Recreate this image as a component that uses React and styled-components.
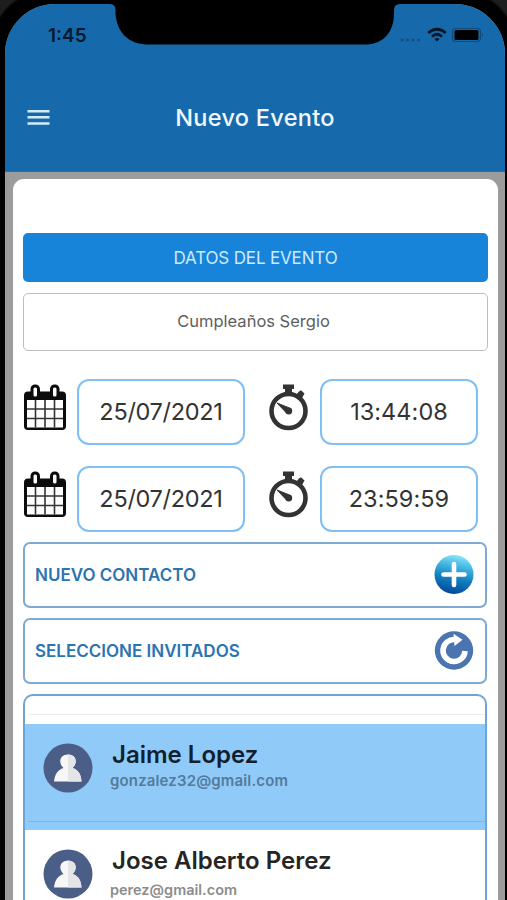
import React, { useState } from 'react';
import styled, { createGlobalStyle } from 'styled-components';

const GlobalStyle = createGlobalStyle`
  * {
    box-sizing: border-box;
  }
  body {
    margin: 0;
    background: #000;
    font-family: Inter, "Liberation Sans", sans-serif;
    overflow: hidden;
  }
`;

const Phone = styled.div`
  width: 507px;
  height: 900px;
  padding: 4px 2px 0 5px;
  overflow: hidden;
  background:
    radial-gradient(circle at 46px 46px, transparent 53px, #1e1e1e 56px) 0 0 / 46px 46px no-repeat,
    radial-gradient(circle at 0 46px, transparent 53px, #1e1e1e 56px) 100% 0 / 46px 46px no-repeat,
    #000;
`;
const Screen = styled.div`
  display: flex;
  flex-direction: column;
  height: 896px;
  border-radius: 50px 50px 0 0;
  overflow: hidden;
  background: #9c9c9c;
`;
const Header = styled.header`
  position: relative;
  flex: none;
  height: 168px;
  background: #166aab;
  border-bottom: 1px solid #3c6f98;
`;
const Notch = styled.svg`
  position: absolute;
  top: 0;
  left: 105px;
`;
const StatusBar = styled.div`
  display: flex;
  justify-content: space-between;
  align-items: center;
  height: 60px;
  padding: 2px 21px 0 43px;
`;
const Clock = styled.div`
  font-size: 19px;
  font-weight: 600;
  color: #07182a;
`;
const TitleBar = styled.div`
  display: grid;
  grid-template-columns: 1fr auto 1fr;
  align-items: center;
  height: 106px;
  padding: 0 22px;
`;
const Title = styled.h1`
  margin: 0;
  font-size: 23.5px;
  font-weight: 500;
  letter-spacing: 0.3px;
  color: #f1f8ff;
`;
const Card = styled.main`
  display: flex;
  flex-direction: column;
  flex: 1;
  margin: 7px 7px 0 8px;
  padding: 54px 10px 0;
  border-radius: 11px 11px 0 0;
  background: #fff;
`;
const DataButton = styled.button`
  flex: none;
  height: 49px;
  padding: 0 6px;
  border: none;
  border-radius: 5px;
  background: #1784da;
  color: #cdeaff;
  font-family: inherit;
  font-size: 17px;
  letter-spacing: -0.15px;
`;
const NameInput = styled.input`
  flex: none;
  height: 58px;
  margin: 11px 0 28px;
  padding: 0 5px 2px 1px;
  border: 1px solid #bdbdbd;
  border-radius: 5px;
  outline: none;
  font-family: inherit;
  font-size: 16.5px;
  letter-spacing: 0;
  text-align: center;
  color: #5e5e5e;
`;
const DateRow = styled.div`
  display: flex;
  align-items: center;
  flex: none;
  height: 66px;
  margin-bottom: ${(props) => (props.$last ? 10 : 21)}px;
  > svg {
    flex: none;
    margin-bottom: 11px;
  }
`;
const DateBox = styled.div`
  display: flex;
  justify-content: center;
  align-items: center;
  width: ${(props) => props.$width}px;
  height: 66px;
  margin-left: ${(props) => props.$gap}px;
  padding-bottom: 2px;
  border: 2px solid #80bff5;
  border-radius: 12px;
  font-size: 23.5px;
  letter-spacing: ${(props) => props.$spacing}px;
  color: #333;
`;
const ActionRow = styled.div`
  display: flex;
  justify-content: space-between;
  align-items: center;
  flex: none;
  height: 66px;
  margin: 0 1px 10px 0;
  padding: 0 11px 0 10px;
  border: 2px solid #7ea9d2;
  border-radius: 7px;
`;
const ActionLabel = styled.span`
  font-size: 17px;
  font-weight: 600;
  letter-spacing: 0;
  color: #2b74b2;
`;
const GuestList = styled.div`
  flex: 1;
  margin-right: 1px;
  padding-top: 18px;
  border: 2px solid #6fa3d3;
  border-bottom: none;
  border-radius: 10px 10px 0 0;
  overflow: hidden;
`;
const Divider = styled.div`
  height: 1px;
  margin-left: 3px;
  background: ${(props) => (props.$selected ? '#7fb4e3' : '#ededed')};
`;
const Guest = styled.div`
  height: 106px;
  margin-top: ${(props) => (props.$first ? 9 : 0)}px;
  background: ${(props) => (props.$selected ? '#90caf8' : '#fff')};
`;
const GuestBody = styled.div`
  display: flex;
  height: 97px;
  padding: 19px 0 0 18px;
`;
const GuestInfo = styled.div`
  margin-left: 17px;
  padding-top: 1px;
`;
const GuestName = styled.div`
  height: 22px;
  padding-left: 2px;
  line-height: 22px;
  font-size: 24px;
  font-weight: 600;
  color: ${(props) => (props.$selected ? '#10202f' : '#252525')};
`;
const GuestMail = styled.div`
  margin-top: ${(props) => (props.$selected ? 5 : 8)}px;
  line-height: 20px;
  font-size: ${(props) => (props.$selected ? 15 : 14.5)}px;
  font-weight: 600;
  letter-spacing: ${(props) => (props.$selected ? 0.15 : 0)}px;
  color: ${(props) => (props.$selected ? '#547a9b' : '#8c8c8c')};
`;

const NotchShape = () => (
  <Notch width="290" height="41" viewBox="0 0 290 41">
    <path d="M0 0 Q5.500 0 5.500 6 V10 C7 29 19 40 37 40.500 H257 C273 40 284 28 284 10 V6 Q284 0 290 0 Z" fill="#000" />
  </Notch>
);

const StatusIcons = () => (
  <svg width="86" height="20" viewBox="0 0 86 20">
    <g fill="#0d4f86">
      <circle cx="4" cy="15" r="1.500" />
      <circle cx="9.500" cy="15" r="1.500" />
      <circle cx="15" cy="15" r="1.500" />
      <circle cx="20.500" cy="15" r="1.500" />
    </g>
    <g fill="none" stroke="#051525" strokeWidth="2.700">
      <path d="M30.200 8 Q39 0.500 47.800 8" />
      <path d="M34 11.500 Q39 7 44 11.500" />
    </g>
    <path d="M36.500 14 Q39 12 41.500 14 L39 16.600 Z" fill="#051525" />
    <rect x="54.500" y="3.500" width="28" height="13" rx="3.500" fill="none" stroke="#0e4a7c" strokeWidth="1.200" />
    <rect x="56.500" y="5" width="24" height="10" rx="1.500" fill="#000" />
    <path d="M84 8 Q86 10 84 12 Z" fill="#0e4a7c" />
  </svg>
);

const MenuIcon = () => (
  <svg width="24" height="18" viewBox="0 0 24 18">
    <path d="M0.500 3.200 H22.500 M0.500 9.300 H22.500 M0.500 15.400 H22.500" stroke="#d5ebfb" strokeWidth="2.500" />
  </svg>
);

const CalendarIcon = () => (
  <svg width="44" height="48" viewBox="0 0 44 48">
    <rect x="1" y="8.500" width="42" height="38.500" rx="4" fill="#0c0c0c" />
    <rect x="4" y="17" width="36" height="27.500" fill="#fff" />
    <path d="M12.500 17 V44.500 M22 17 V44.500 M31.500 17 V44.500 M4 26 H40 M4 35.500 H40" stroke="#333" strokeWidth="1.600" />
    <g fill="#fff" stroke="#0c0c0c" strokeWidth="3">
      <rect x="9" y="3" width="6.500" height="12" rx="3" />
      <rect x="28.500" y="3" width="6.500" height="12" rx="3" />
    </g>
  </svg>
);

const StopwatchIcon = () => (
  <svg width="40" height="48" viewBox="0 0 40 48" style={{ marginLeft: 24 }}>
    <g fill="#333">
      <path d="M14 1.500 H25 V6 H23 V11 H16 V6 H14 Z" />
      <path d="M27 12 L30 8.500 L32 7.200 L35.500 10.500 L33 15 Z" />
    </g>
    <circle cx="19.500" cy="28" r="17" fill="#fff" stroke="#333" strokeWidth="4.600" />
    <path d="M8 20 L20.500 25 L18 30.500 Z" fill="#333" stroke="#333" strokeLinejoin="round" />
    <circle cx="19.800" cy="28" r="3.400" fill="#333" />
  </svg>
);

const AddIcon = () => (
  <svg width="40" height="40" viewBox="0 0 40 40">
    <defs>
      <linearGradient id="add" x1="0.600" y1="0" x2="0.400" y2="1">
        <stop offset="0" stopColor="#8be6fa" />
        <stop offset="0.280" stopColor="#45b7e3" />
        <stop offset="0.600" stopColor="#127fbe" />
        <stop offset="1" stopColor="#03489a" />
      </linearGradient>
    </defs>
    <circle cx="20" cy="19.500" r="19.500" fill="url(#add)" />
    <path d="M20 9 V30 M9.500 19.500 H30.500" stroke="#fff" strokeWidth="4.600" strokeLinecap="round" />
  </svg>
);

const ReloadIcon = () => (
  <svg width="40" height="40" viewBox="0 0 40 40">
    <circle cx="20" cy="19.500" r="19.200" fill="#4b75b0" />
    <path d="M21.500 8.600 A11 11 0 1 0 31 20" fill="none" stroke="#fff" strokeWidth="5.600" />
    <path d="M19.500 2.800 L28.500 8.700 L20.500 15 Z" fill="#fff" />
  </svg>
);

const Avatar = () => (
  <svg width="50" height="50" viewBox="0 0 50 50">
    <circle cx="25" cy="25" r="24.500" fill="#4b5e87" />
    <path d="M11 38.500 C12 31 14.500 27 20.500 25 C15 20 16.500 11.500 25 11.500 C33.500 11.500 35 20 29.500 25 C35.500 27 38 31 38.500 38.500 Z" fill="#f7f7f7" />
    <path d="M25 11.500 C33.500 11.500 35 20 29.500 25 C35.500 27 38 31 38.500 38.500 H25 Z" fill="#e4e5e7" />
  </svg>
);

const dates = [
  { date: '25/07/2021', time: '13:44:08' },
  { date: '25/07/2021', time: '23:59:59' },
];

const guests = [
  { name: 'Jaime Lopez', mail: 'gonzalez32@gmail.com' },
  { name: 'Jose Alberto Perez', mail: 'perez@gmail.com' },
];

function App() {
  const [eventName, setEventName] = useState('Cumpleaños Sergio');
  const [selected, setSelected] = useState(0);

  return (
    <>
      <GlobalStyle />
      <Phone>
        <Screen>
          <Header>
            <NotchShape />
            <StatusBar>
              <Clock>1:45</Clock>
              <StatusIcons />
            </StatusBar>
            <TitleBar>
              <MenuIcon />
              <Title>Nuevo Evento</Title>
            </TitleBar>
          </Header>
          <Card>
            <DataButton>DATOS DEL EVENTO</DataButton>
            <NameInput value={eventName} onChange={(e) => setEventName(e.target.value)} />
            {dates.map((item, index) => (
              <DateRow key={item.time} $last={index === dates.length - 1}>
                <CalendarIcon />
                <DateBox $width={168} $gap={10} $spacing={-0.3}>{item.date}</DateBox>
                <StopwatchIcon />
                <DateBox $width={158} $gap={11} $spacing={0.05}>{item.time}</DateBox>
              </DateRow>
            ))}
            <ActionRow>
              <ActionLabel>NUEVO CONTACTO</ActionLabel>
              <AddIcon />
            </ActionRow>
            <ActionRow>
              <ActionLabel>SELECCIONE INVITADOS</ActionLabel>
              <ReloadIcon />
            </ActionRow>
            <GuestList>
              <Divider />
              {guests.map((guest, index) => (
                <Guest
                  key={guest.mail}
                  $first={index === 0}
                  $selected={index === selected}
                  onClick={() => setSelected(index)}
                >
                  <GuestBody>
                    <Avatar />
                    <GuestInfo>
                      <GuestName $selected={index === selected}>{guest.name}</GuestName>
                      <GuestMail $selected={index === selected}>{guest.mail}</GuestMail>
                    </GuestInfo>
                  </GuestBody>
                  <Divider $selected={index === selected} />
                </Guest>
              ))}
            </GuestList>
          </Card>
        </Screen>
      </Phone>
    </>
  );
}

export default App;
